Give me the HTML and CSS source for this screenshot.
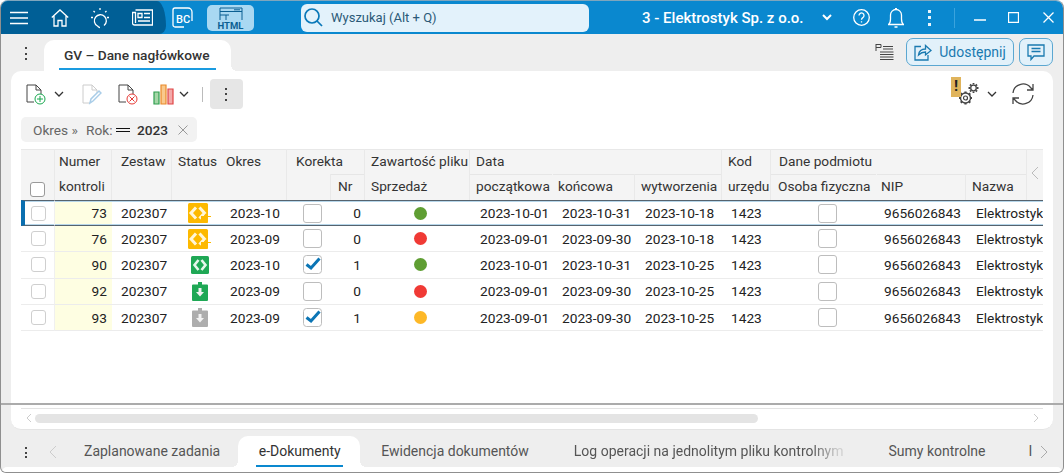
FILE: index.html
```html
<!DOCTYPE html>
<html lang="pl">
<head>
    <meta charset="UTF-8">
    <title>GV - Dane nagłówkowe</title>
    <link rel="stylesheet" href="styles.css">
</head>
<body>
    <svg class="defs" width="0" height="0">
        <symbol id="stat-send" viewBox="0 0 24 20">
            <rect x="0" y="0" width="20" height="20" rx="1.5" fill="#fdb900"/>
            <path d="M8 4.500 3 10l5 5.500M11.500 4.500 16.500 10l-5 5.500" fill="none" stroke="#fff6d8" stroke-width="3"/>
            <path d="M13 13h3l1.500-2.500L19.500 13H23v1h-3.500v6H13z" fill="#fdb900"/>
        </symbol>
        <symbol id="stat-ok" viewBox="0 0 18 18">
            <rect width="18" height="18" rx="1.500" fill="#1fa855"/>
            <path d="M7.500 4 3.500 9l4 5M10.500 4l4 5-4 5" fill="none" stroke="#e6f7ec" stroke-width="2.600"/>
        </symbol>
        <symbol id="stat-down" viewBox="0 0 16 19">
            <path d="M1 2.500h5V0h4v2.500h5q1 0 1 1V18q0 1-1 1H1q-1 0-1-1V3.500q0-1 1-1z" fill="currentColor"/>
            <path d="M6.500 6h3v4H12l-4 4.500L4 10h2.500z" fill="#f2f2f2"/>
        </symbol>
        <symbol id="check" viewBox="0 0 19 19">
            <rect x=".5" y=".5" width="18" height="18" rx="3" fill="#fff" stroke="#bdbdbd"/>
            <path d="M3.500 9.500 8 13 16.500 3.500" fill="none" stroke="#0b75b5" stroke-width="3"/>
        </symbol>
    </svg>

    <div class="window">
        <header class="titlebar">
            <div class="nav-zone">
                <svg class="ico hamburger" width="18" height="14" viewBox="0 0 18 14"><path d="M0 1.500h18M0 7h18M0 12.500h18"/></svg>
                <svg class="ico home" width="18" height="18" viewBox="0 0 18 18"><path d="M.8 8.500 9 1l8.200 7.500M3 7v10h4v-5.500h4V17h4V7"/></svg>
                <svg class="ico bulb" width="22" height="22" viewBox="0 0 22 22"><path d="M11 20.500c-1 0-1.500-.8-2.500-1.500a6 6 0 1 1 6.500-.5M11 1v2M2 10.500h2M18 10.500h2M4.500 4l1.300 1.300M17.500 4l-1.300 1.300"/></svg>
                <svg class="ico news" width="21" height="17" viewBox="0 0 21 17"><path d="M3.500 1h17v15H2.500a2 2 0 0 1-2-2V3.500h3V14"/><path d="M6 4.500h4v4H6zM12 4.500h6M12 8.500h6M6 12h12"/></svg>
            </div>
            <svg class="ico bc" width="21" height="21" viewBox="0 0 21 21"><path d="M12 20H3a2 2 0 0 1-2-2V3a2 2 0 0 1 2-2h13a4 4 0 0 1 4 4v9"/></svg>
            <span class="bc-label">BC</span>
            <div class="html-btn">
                <svg class="ico-dark" width="24" height="14" viewBox="0 0 24 14"><path d="M1 1h22v12M1 1v12M1 4.500h22M1 8h9M7 8v5M15 2.800h6"/></svg>
                <span>HTML</span>
            </div>
            <div class="search">
                <svg class="search-ico" width="19" height="19" viewBox="0 0 19 19"><circle cx="8" cy="8" r="7"/><path d="m13 13 5 5"/></svg>
                <span>Wyszukaj (Alt + Q)</span>
            </div>
            <div class="company">3 - Elektrostyk Sp. z o.o.</div>
            <svg class="ico chev-white" width="10" height="7" viewBox="0 0 10 7"><path d="m1 1 4 4 4-4"/></svg>
            <svg class="ico help" width="17" height="17" viewBox="0 0 17 17"><circle cx="8.500" cy="8.500" r="7.800"/><path d="M6 6.500a2.500 2.500 0 1 1 3.800 2.100c-.9.600-1.300 1-1.300 2.200M8.500 12.200v1.300"/></svg>
            <svg class="ico bell" width="16" height="20" viewBox="0 0 16 20"><path d="M.5 16.500h15c-1.500-1-2-2.500-2-5.500V7a5.500 5.500 0 0 0-11 0v4c0 3-.5 4.500-2 5.500zM7 .5h2M6.500 19h3"/></svg>
            <div class="kebab kebab-white"><i></i><i></i><i></i></div>
            <div class="win-sep"></div>
            <svg class="ico win-min" width="12" height="2" viewBox="0 0 12 2"><path d="M0 1h12"/></svg>
            <svg class="ico win-max" width="11" height="11" viewBox="0 0 11 11"><path d="M.5.500h10v10H.5z"/></svg>
            <svg class="ico win-close" width="11" height="11" viewBox="0 0 11 11"><path d="m.5.500 10 10M10.500.500l-10 10"/></svg>
        </header>

        <div class="tabbar">
            <div class="kebab kebab-dark"><i></i><i></i><i></i></div>
            <div class="doc-tab"><span>GV – Dane nagłówkowe</span></div>
            <svg class="flag-ico" width="19" height="17" viewBox="0 0 19 17"><path d="M1 0v7M1 .500h5v3H1M8 2.500h10M8 5h10M5 8h13.500M5 10.500h13.500M5 13h13.500M5 15.500h13.500"/></svg>
            <button class="share-btn">
                <svg width="18" height="18" viewBox="0 0 18 18"><path d="M7 3.500H1V17h13v-5M4.500 12c.5-4 3-6 7-6V2.500L17 7.500 11.500 12V9C9 9 6.500 10 4.500 12z"/></svg>
                Udostępnij
            </button>
            <button class="comment-btn">
                <svg width="18" height="17" viewBox="0 0 18 17"><path d="M1 1h16v11H7l-3 3.500V12H1zM4.500 4.500h9M4.500 7.500h9"/></svg>
            </button>
        </div>

        <main class="card">
            <div class="toolbar">
                <svg class="tb tb-new" width="20" height="21" viewBox="0 0 20 21"><path fill="none" stroke="#444" d="M8 18H1V1h9l5 5v5M10 1v5h5"/><circle cx="14" cy="15" r="5" fill="#fff" stroke="#18a84f"/><path stroke="#18a84f" d="M14 12v6M11 15h6"/></svg>
                <svg class="chev chev-1" width="10" height="6" viewBox="0 0 10 6"><path d="m1 1 4 4 4-4"/></svg>
                <svg class="tb tb-edit" width="20" height="21" viewBox="0 0 20 21"><path fill="none" stroke="#ccc" d="M8 19H1V1h9l5 5v3M10 1v5h5"/><path fill="none" stroke="#a9cde8" stroke-width="1.500" d="m8 19 1-4L17 7l2 2-8 8z"/></svg>
                <svg class="tb tb-del" width="20" height="21" viewBox="0 0 20 21"><path fill="none" stroke="#444" d="M8 18H1V1h9l5 5v5M10 1v5h5"/><circle cx="14" cy="15" r="5" fill="#fff" stroke="#e53935"/><path stroke="#e53935" d="m11.500 12.500 5 5M16.500 12.500l-5 5"/></svg>
                <svg class="tb tb-chart" width="22" height="21" viewBox="0 0 22 21"><path fill="#a5d6a7" stroke="#2e9e4f" stroke-width="1.200" d="M1 8h5v12H1z"/><path fill="#f9c98d" stroke="#ea8a2b" stroke-width="1.200" d="M8 1h5v19H8z"/><path fill="#f3a9a9" stroke="#e04545" stroke-width="1.200" d="M15 5h5v15h-5z"/></svg>
                <svg class="chev chev-2" width="10" height="6" viewBox="0 0 10 6"><path d="m1 1 4 4 4-4"/></svg>
                <div class="tb-sep"></div>
                <div class="tb-more"><div class="kebab kebab-dark"><i></i><i></i><i></i></div></div>

                <div class="warn-wrap">
                    <svg class="gears" width="21" height="24" viewBox="0 0 21 24"><g fill="none" stroke="#444"><circle cx="7.500" cy="17" r="2" stroke-width="1.200"/><circle cx="7.500" cy="17" r="5" stroke-width="1.400"/><path stroke-width="2.200" d="M7.500 10.500V12M7.500 22v1.500M1 17h1.500M12.500 17H14M2.800 12.300l1.100 1.100M11.100 20.600l1.100 1.100M12.200 12.300l-1.100 1.100M3.900 20.600l-1.100 1.100"/><circle cx="15.500" cy="7" r="2.800" stroke-width="1.300"/><path stroke-width="1.800" d="M15.500 2v1.500M15.500 10.500V12M10.500 7H12M19 7h1.500M12 3.500l1 1M18 9.500l1 1M19 3.500l-1 1M13 9.500l-1 1"/></g></svg>
                    <div class="warn">!</div>
                </div>
                <svg class="chev chev-3" width="10" height="6" viewBox="0 0 10 6"><path d="m1 1 4 4 4-4"/></svg>
                <svg class="refresh" width="22" height="22" viewBox="0 0 22 22"><path d="M1 10a10 10 0 0 1 17.500-5.500L21 7M21 1v6h-6M21 12a10 10 0 0 1-17.500 5.500L1 15M1 21v-6h6"/></svg>
            </div>

            <div class="chip">
                <span class="chip-group">Okres »</span>
                <span class="chip-field">Rok:</span>
                <span class="chip-eq"></span>
                <span class="chip-val">2023</span>
                <svg class="chip-x" width="10" height="10" viewBox="0 0 10 10"><path d="m.5.500 9 9M9.500.500l-9 9"/></svg>
            </div>

            <div class="grid-wrap">
                <table class="grid">
                    <colgroup>
                        <col><col><col><col><col><col><col><col><col><col><col><col><col><col><col><col>
                    </colgroup>
                    <thead>
                        <tr>
                            <th rowspan="2" class="th-check"><span class="box head-box"></span></th>
                            <th rowspan="2" class="p4">Numer<br>kontroli</th>
                            <th rowspan="2" class="p9">Zestaw</th>
                            <th rowspan="2" class="p6 no-r">Status</th>
                            <th rowspan="2" class="p4">Okres</th>
                            <th colspan="2" class="p9">Korekta</th>
                            <th rowspan="2" class="p6">Zawartość pliku<br>Sprzedaż</th>
                            <th colspan="3" class="p6">Data</th>
                            <th rowspan="2" class="p6">Kod<br>urzędu</th>
                            <th colspan="3" class="p8">Dane podmiotu</th>
                            <th rowspan="2" class="th-arrow"><svg width="8" height="14" viewBox="0 0 8 14"><path d="M7 1 1 7l6 6"/></svg></th>
                        </tr>
                        <tr>
                            <th></th>
                            <th class="p7 sub">Nr</th>
                            <th class="p6 sub no-r">początkowa</th>
                            <th class="p5 sub">końcowa</th>
                            <th class="p6 sub">wytworzenia</th>
                            <th class="p7 sub no-r">Osoba fizyczna</th>
                            <th class="p4 sub">NIP</th>
                            <th class="p6 sub">Nazwa</th>
                        </tr>
                    </thead>
                    <tbody>
                        <tr class="current">
                            <td class="c-check"><span class="box"></span></td>
                            <td class="c-num">73</td><td class="p9">202307</td>
                            <td class="c-stat"><svg class="s-send" width="24" height="20"><use href="#stat-send"/></svg></td>
                            <td class="p8">2023-10</td>
                            <td class="c-kor"><span class="box big"></span></td><td class="c-nr">0</td>
                            <td class="c-dot"><i class="dot green"></i></td>
                            <td class="p10">2023-10-01</td><td class="p9">2023-10-31</td><td class="p10">2023-10-18</td><td class="p9">1423</td>
                            <td class="c-os"><span class="box big"></span></td><td class="p7">9656026843</td><td colspan="2" class="p10">Elektrostyk</td>
                        </tr>
                        <tr>
                            <td class="c-check"><span class="box"></span></td>
                            <td class="c-num">76</td><td class="p9">202307</td>
                            <td class="c-stat"><svg class="s-send" width="24" height="20"><use href="#stat-send"/></svg></td>
                            <td class="p8">2023-09</td>
                            <td class="c-kor"><span class="box big"></span></td><td class="c-nr">0</td>
                            <td class="c-dot"><i class="dot red"></i></td>
                            <td class="p10">2023-09-01</td><td class="p9">2023-09-30</td><td class="p10">2023-10-18</td><td class="p9">1423</td>
                            <td class="c-os"><span class="box big"></span></td><td class="p7">9656026843</td><td colspan="2" class="p10">Elektrostyk</td>
                        </tr>
                        <tr>
                            <td class="c-check"><span class="box"></span></td>
                            <td class="c-num">90</td><td class="p9">202307</td>
                            <td class="c-stat"><svg class="s-ok" width="18" height="18"><use href="#stat-ok"/></svg></td>
                            <td class="p8">2023-10</td>
                            <td class="c-kor"><svg class="big-check" width="19" height="19"><use href="#check"/></svg></td><td class="c-nr">1</td>
                            <td class="c-dot"><i class="dot green"></i></td>
                            <td class="p10">2023-10-01</td><td class="p9">2023-10-31</td><td class="p10">2023-10-25</td><td class="p9">1423</td>
                            <td class="c-os"><span class="box big"></span></td><td class="p7">9656026843</td><td colspan="2" class="p10">Elektrostyk</td>
                        </tr>
                        <tr>
                            <td class="c-check"><span class="box"></span></td>
                            <td class="c-num">92</td><td class="p9">202307</td>
                            <td class="c-stat"><svg class="s-down s-green" width="16" height="19"><use href="#stat-down"/></svg></td>
                            <td class="p8">2023-09</td>
                            <td class="c-kor"><span class="box big"></span></td><td class="c-nr">0</td>
                            <td class="c-dot"><i class="dot red"></i></td>
                            <td class="p10">2023-09-01</td><td class="p9">2023-09-30</td><td class="p10">2023-10-25</td><td class="p9">1423</td>
                            <td class="c-os"><span class="box big"></span></td><td class="p7">9656026843</td><td colspan="2" class="p10">Elektrostyk</td>
                        </tr>
                        <tr>
                            <td class="c-check"><span class="box"></span></td>
                            <td class="c-num">93</td><td class="p9">202307</td>
                            <td class="c-stat"><svg class="s-down s-grey" width="16" height="19"><use href="#stat-down"/></svg></td>
                            <td class="p8">2023-09</td>
                            <td class="c-kor"><svg class="big-check" width="19" height="19"><use href="#check"/></svg></td><td class="c-nr">1</td>
                            <td class="c-dot"><i class="dot yellow"></i></td>
                            <td class="p10">2023-09-01</td><td class="p9">2023-09-30</td><td class="p10">2023-10-25</td><td class="p9">1423</td>
                            <td class="c-os"><span class="box big"></span></td><td class="p7">9656026843</td><td colspan="2" class="p10">Elektrostyk</td>
                        </tr>
                    </tbody>
                </table>
            </div>
        </main>

        <div class="splitter"></div>

        <div class="lower">
            <div class="scroll-panel">
                <div class="scroll-line"></div>
                <div class="scroll-row">
                    <svg class="arrow-sm" width="6" height="10" viewBox="0 0 6 10"><path d="M5 1 1 5l4 4"/></svg>
                    <div class="scroll-track"><div class="scroll-thumb"></div></div>
                    <svg class="arrow-sm" width="6" height="10" viewBox="0 0 6 10"><path d="m1 1 4 4-4 4"/></svg>
                </div>
            </div>
            <div class="bottom-tabs">
                <div class="kebab kebab-dark"><i></i><i></i><i></i></div>
                <svg class="arrow-tab arrow-left" width="8" height="14" viewBox="0 0 8 14"><path d="M7 1 1 7l6 6"/></svg>
                <div class="btab first">Zaplanowane zadania</div>
                <div class="btab active"><span>e-Dokumenty</span></div>
                <div class="btab">Ewidencja dokumentów</div>
                <div class="btab"><span class="fade">Log operacji na jednolitym pliku kontrolnym</span></div>
                <div class="btab">Sumy kontrolne</div>
                <div class="btab-rest">I</div>
                <svg class="arrow-tab arrow-right" width="8" height="14" viewBox="0 0 8 14"><path d="m1 1 6 6-6 6"/></svg>
            </div>
            <div class="lower-strip"></div>
        </div>
    </div>
</body>
</html>
```

FILE: styles.css
```css
* {
    box-sizing: border-box;
}

html, body {
    margin: 0;
    padding: 0;
    height: 100%;
    overflow: hidden;
}

body {
    background: #fff;
    color: #222;
    font-family: Roboto, "Liberation Sans", sans-serif;
    font-size: 13.7px;
}

.defs {
    display: block;
    height: 0;
}

.window {
    height: 473px;
    display: flex;
    flex-direction: column;
    background: #eee;
    border: 1px solid #8f8f8f;
    border-top-color: #7fa6bd;
    border-radius: 8px 8px 6px 6px;
    overflow: hidden;
}

/* Title bar */
.titlebar {
    height: 33px;
    flex: none;
    display: flex;
    align-items: center;
    background: #0a88cf;
    color: #fff;
}

.nav-zone {
    width: 165px;
    height: 33px;
    flex: none;
    display: flex;
    align-items: center;
    background: #005f96;
    border-radius: 0 9px 7px 0 / 0 25px 8px 0;
}

.ico {
    flex: none;
    fill: none;
    stroke: #fff;
    stroke-width: 1.3;
}

.hamburger { margin-left: 9px; }
.home { margin-left: 23px; }
.bulb { margin-left: 20px; }
.news { margin-left: 21px; }

.bc {
    margin-left: 6px;
}

.bc-label {
    margin-left: -17px;
    margin-top: 4px;
    width: 17px;
    font-size: 11px;
    font-weight: 500;
}

.html-btn {
    width: 47px;
    height: 26px;
    margin-left: 14px;
    background: #a9d8f2;
    border-radius: 5px;
    display: flex;
    flex-direction: column;
    align-items: center;
    color: #0a5f92;
    font-size: 9.500px;
    font-weight: 700;
    line-height: 10px;
    padding-top: 2px;
}

.ico-dark {
    fill: none;
    stroke: #0a5f92;
    stroke-width: 1;
}

.search {
    width: 288px;
    height: 28px;
    margin-left: 47px;
    background: #e3f2fb;
    border-radius: 6px;
    display: flex;
    align-items: center;
    gap: 8px;
    padding-left: 3px;
    color: #2b5a78;
    font-size: 13px;
}

.search-ico {
    fill: none;
    stroke: #0a78b8;
    stroke-width: 1.700;
}

.company {
    width: 161px;
    margin-left: 53px;
    font-size: 15px;
    font-weight: 500;
    white-space: nowrap;
}

.chev-white { margin-left: 19px; stroke-width: 2; }
.help { margin-left: 21px; }
.bell { margin-left: 18px; }

.kebab {
    flex: none;
    display: flex;
    flex-direction: column;
    gap: 3.500px;
    width: 3px;
}

.kebab i {
    display: block;
    width: 2px;
    height: 2px;
    background: #444;
}

.kebab-white { margin-left: 24px; }
.kebab-white i { width: 3px; height: 3px; background: #e8f4fb; }

.win-sep {
    width: 1px;
    height: 20px;
    margin-left: 23px;
    background: #3aa3dd;
}

.win-min { margin-left: 19px; margin-top: 5px; }
.win-max { margin-left: 22px; }
.win-close { margin-left: 24px; }

/* Document tab row */
.tabbar {
    height: 37px;
    flex: none;
    display: flex;
    align-items: flex-end;
}

.tabbar > .kebab {
    margin: 0 16px 11px 24px;
}

.doc-tab {
    width: 187px;
    height: 31px;
    position: relative;
    background: #fff;
    border-radius: 10px 10px 0 0;
    padding: 6px 15px 0;
    font-size: 13.700px;
    font-weight: 500;
    color: #333;
}

.doc-tab span {
    display: block;
    height: 24px;
    padding-left: 5px;
    line-height: 19px;
    white-space: nowrap;
    border-bottom: 2px solid #1a9be0;
}

/* flared foot of the active tabs */
.doc-tab::after,
.btab.active::after {
    content: "";
    position: absolute;
    right: -6px;
    bottom: 0;
    width: 6px;
    height: 6px;
    background: radial-gradient(circle at 100% 0, transparent 6px, #fff 6px);
}

.btab.active::before {
    content: "";
    position: absolute;
    left: -6px;
    bottom: 0;
    width: 6px;
    height: 6px;
    background: radial-gradient(circle at 0 0, transparent 6px, #fff 6px);
}

.flag-ico {
    margin: 0 0 10px 644px;
    fill: none;
    stroke: #444;
    stroke-width: 1;
}

.share-btn,
.comment-btn {
    height: 28px;
    margin-bottom: 5px;
    background: #e2f1fa;
    border: 1px solid #5ba7d1;
    border-radius: 7px;
    color: #1a7ab0;
    font-family: inherit;
    font-size: 14px;
    display: flex;
    align-items: center;
    justify-content: center;
    padding: 0;
}

.share-btn {
    width: 108px;
    margin-left: 12px;
    gap: 7px;
}

.comment-btn {
    width: 34px;
    margin-left: 5px;
}

.share-btn svg,
.comment-btn svg {
    fill: none;
    stroke: #1a7ab0;
    stroke-width: 1.300;
}

/* Main card */
.card {
    flex: 1;
    min-height: 0;
    margin: 0 10px;
    background: #fff;
    border-radius: 10px 10px 0 0;
    padding: 0 10px;
    display: flex;
    flex-direction: column;
}

.toolbar {
    height: 46px;
    flex: none;
    display: flex;
    align-items: center;
}

.toolbar svg {
    flex: none;
}

.tb-new { margin-left: 5px; }
.tb-edit { margin-left: 18px; }
.tb-del { margin-left: 16px; }
.tb-chart { margin-left: 15px; }

.chev {
    fill: none;
    stroke: #333;
    stroke-width: 1.300;
}

.chev-1 { margin-left: 8px; }
.chev-2 { margin-left: 4px; }

.tb-sep {
    width: 1px;
    height: 15px;
    margin-left: 13px;
    background: #bbb;
}

.tb-more {
    width: 33px;
    height: 30px;
    margin-left: 7px;
    background: #e6e6e6;
    border-radius: 4px;
    display: flex;
    align-items: center;
    justify-content: center;
}

.warn-wrap {
    width: 26px;
    height: 27px;
    align-self: flex-start;
    margin: 6px 0 0 auto;
    position: relative;
}

.gears {
    position: absolute;
    left: 7px;
    top: 4px;
}

.warn {
    position: absolute;
    left: 0;
    top: 0;
    width: 10px;
    height: 20px;
    background: #e0b45c;
    color: #222;
    font-size: 15px;
    font-weight: 700;
    line-height: 19px;
    text-align: center;
}

.chev-3 { margin-left: 10px; }

.refresh {
    margin-left: 15px;
    margin-right: 9px;
    fill: none;
    stroke: #444;
    stroke-width: 1.300;
}

.chip {
    width: 176px;
    height: 25px;
    flex: none;
    display: flex;
    align-items: center;
    background: #f2f2f2;
    border-radius: 5px;
    padding-left: 12px;
    color: #666;
    white-space: nowrap;
}

.chip-group { width: 53px; }
.chip-field { width: 30px; }

.chip-eq {
    width: 14px;
    height: 4px;
    border-top: 1px solid #111;
    border-bottom: 1px solid #111;
}

.chip-val {
    margin-left: 7px;
    color: #333;
    font-weight: 500;
}

.chip-x {
    margin-left: 10px;
    fill: none;
    stroke: #999;
    stroke-width: 1;
}

/* Grid */
.grid-wrap {
    margin-top: 7px;
    width: 1022px;
    overflow: hidden;
}

.grid {
    width: 1022px;
    table-layout: fixed;
    border-collapse: separate;
    border-spacing: 0;
}

.grid col:nth-child(1) { width: 34px; }
.grid col:nth-child(2) { width: 57px; }
.grid col:nth-child(3) { width: 60px; }
.grid col:nth-child(4) { width: 50px; }
.grid col:nth-child(5) { width: 65px; }
.grid col:nth-child(6) { width: 44px; }
.grid col:nth-child(7) { width: 34px; }
.grid col:nth-child(8) { width: 105px; }
.grid col:nth-child(9) { width: 83px; }
.grid col:nth-child(10) { width: 82px; }
.grid col:nth-child(11) { width: 87px; }
.grid col:nth-child(12) { width: 49px; }
.grid col:nth-child(13) { width: 106px; }
.grid col:nth-child(14) { width: 89px; }
.grid col:nth-child(15) { width: 61px; }
.grid col:nth-child(16) { width: 16px; }

.grid th {
    padding: 0;
    background: #f4f4f4;
    border-right: 1px solid #e9e9e9;
    color: #333;
    font-weight: 400;
    line-height: 25px;
    text-align: left;
    vertical-align: top;
    white-space: nowrap;
    overflow: hidden;
}

.grid thead tr:first-child th {
    height: 25px;
    box-shadow: inset 0 1px #e8e8e8;
}

.grid thead tr:last-child th {
    height: 26px;
}

.grid thead tr:last-child th.sub {
    box-shadow: inset 0 1px #e6e6e6;
}

.grid th.no-r { border-right-color: #f4f4f4; }

.grid .th-check {
    padding: 33px 0 0 9px;
}

.grid .head-box {
    width: 15px;
    height: 15px;
    display: block;
    border-color: #9a9a9a;
}

.grid .th-arrow {
    border-right: 0;
    padding-top: 17px;
}

.th-arrow svg {
    display: block;
    margin: 0 auto;
    fill: none;
    stroke: #bbb;
    stroke-width: 1;
}

.grid .p4 { padding-left: 4px; }
.grid .p5 { padding-left: 5px; }
.grid .p6 { padding-left: 6px; }
.grid .p7 { padding-left: 7px; }
.grid .p8 { padding-left: 8px; }
.grid .p9 { padding-left: 9px; }
.grid .p10 { padding-left: 10px; }

.grid td {
    height: 26.300px;
    padding: 2px 0 0;
    border-bottom: 1px solid #ececec;
    line-height: 1;
    white-space: nowrap;
    overflow: hidden;
}

.grid tr.current td {
    height: 26px;
    border-top: 1px solid #56636e;
    border-bottom: 1px solid #56636e;
    box-shadow: inset 0 1px #b6d6ea, inset 0 -1px #b6d6ea;
}

.grid tr.current td:first-child {
    border-left: 4px solid #0a6fb0;
    padding-left: 6px;
}

.box {
    display: inline-block;
    width: 15px;
    height: 15px;
    background: #fff;
    border: 1px solid #cfcfcf;
    border-radius: 3px;
    vertical-align: middle;
}

.box.big {
    width: 19px;
    height: 19px;
    border-color: #bdbdbd;
}

.grid .c-check {
    padding: 0 0 0 10px;
    border-right: 1px solid #f0f0f0;
}

.grid .c-num {
    background: #fefee2;
    text-align: right;
    padding-right: 5px;
}

.grid .c-stat {
    padding-top: 0;
}

.c-stat svg,
.big-check {
    display: block;
}

.s-send { margin-left: 16px; }
.s-ok { margin-left: 19px; }
.s-down { margin-left: 20px; }
.s-green { color: #1fa855; }
.s-grey { color: #adadad; }

.grid .c-kor {
    padding: 0 0 0 16px;
}

.grid .c-nr {
    text-align: right;
    padding-right: 4px;
}

.grid .c-dot {
    padding: 0 0 0 49px;
}

.dot {
    display: block;
    width: 13px;
    height: 13px;
    border-radius: 50%;
}

.green { background: #5f9e33; }
.red { background: #f03a35; }
.yellow { background: #fdb827; }

.grid .c-os {
    padding: 0 0 0 47px;
}

/* Splitter and lower panel */
.splitter {
    height: 2px;
    flex: none;
    background: #ababab;
}

.lower {
    height: 67px;
    flex: none;
    display: flex;
    flex-direction: column;
}

.scroll-panel {
    height: 25px;
    flex: none;
    margin: 0 10px;
    padding: 3px 10px 0 10px;
    background: #fff;
    border-radius: 0 0 10px 10px;
    border-bottom: 1px solid #e4e4e4;
}

.scroll-line {
    height: 1px;
    background: #e3e3e3;
}

.scroll-row {
    display: flex;
    align-items: center;
    gap: 3px;
    margin-top: 4px;
    padding: 0 4px 0 5px;
}

.arrow-sm {
    flex: none;
    fill: none;
    stroke: #ccc;
    stroke-width: 1;
}

.scroll-track {
    flex: 1;
}

.scroll-thumb {
    width: 723px;
    height: 9px;
    background: #e4e4e4;
    border-radius: 5px;
}

.bottom-tabs {
    height: 37px;
    flex: none;
    display: flex;
    align-items: flex-end;
    color: #555;
    font-size: 14px;
}

.bottom-tabs > .kebab {
    margin: 0 0 9px 24px;
    gap: 2.500px;
}

.arrow-tab {
    flex: none;
    fill: none;
    stroke: #ccc;
    stroke-width: 1;
    margin-bottom: 8px;
}

.arrow-left { margin-left: 21px; }

.btab {
    height: 31px;
    flex: none;
    padding: 6px 22px 0;
    margin-left: 1px;
    white-space: nowrap;
    line-height: 18px;
}

.btab.first {
    margin-left: 5px;
    padding-right: 18px;
}

.btab.active {
    width: 122px;
    position: relative;
    margin: 0;
    padding: 6px 17px 0 18px;
    background: #fff;
    border-radius: 10px 10px 0 0;
    color: #333;
}

.btab.active + .btab {
    margin-left: -1px;
}

.btab.active span {
    display: block;
    height: 25px;
    text-align: center;
    border-bottom: 2px solid #0a88cf;
}

.fade {
    display: inline-block;
    -webkit-mask-image: linear-gradient(to right, #000 88%, rgba(0,0,0,.2) 98%);
    mask-image: linear-gradient(to right, #000 88%, rgba(0,0,0,.2) 98%);
}

.btab-rest {
    width: 27px;
    height: 31px;
    flex: none;
    padding: 6px 0 0 21px;
    line-height: 18px;
}

.arrow-right {
    margin-left: 6px;
    stroke: #aaa;
}

.lower-strip {
    height: 5px;
    flex: none;
    margin: 0 1px;
    background: #fff;
    border-radius: 6px 6px 0 0;
}
```
